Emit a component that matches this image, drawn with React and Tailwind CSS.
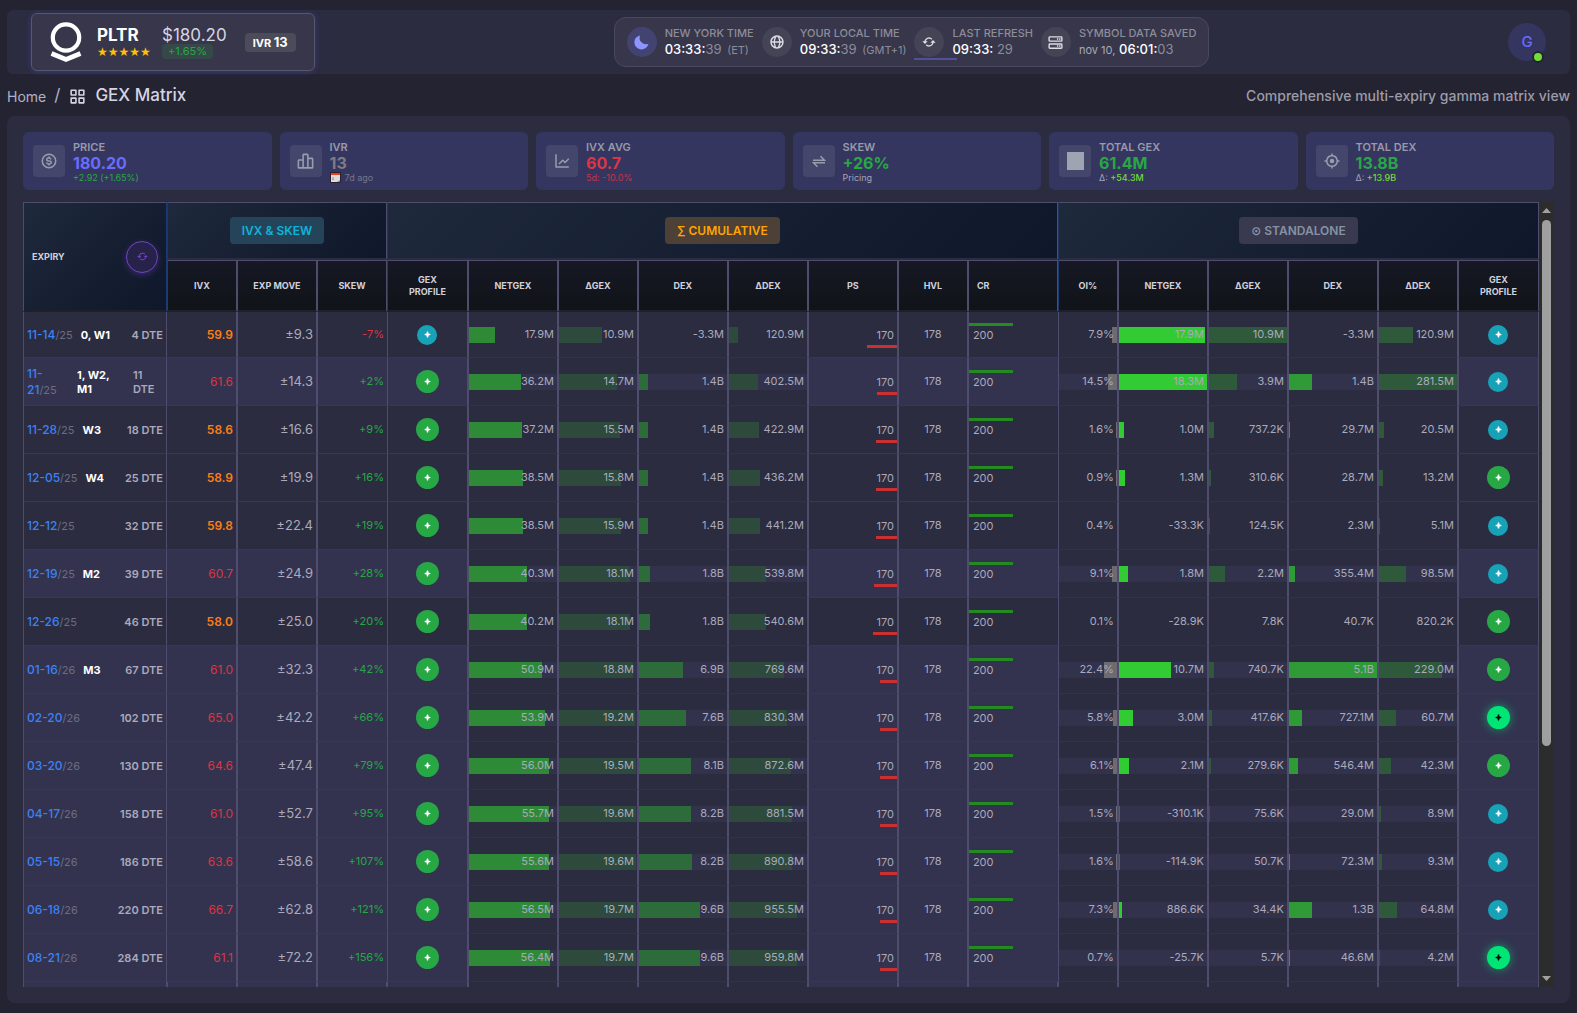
import {
  BiBarChartAlt2,
  BiDollarCircle,
  BiGlobe,
  BiGridAlt,
  BiLineChart,
  BiRefresh,
  BiServer,
  BiSolidMoon,
  BiTargetLock,
} from "react-icons/bi";

// [value, bar width in % of the cell, colour override]
const rows = [
  {
    date: "11-14", year: "/25", tag: "0, W1", dte: "4 DTE", ivx: "59.9", move: "±9.3", skew: "-7%", left: "teal",
    cum: [["17.9M", 30], ["10.9M", 55], ["-3.3M", 0], ["120.9M", 12]], ps: 34,
    oi: ["7.9%", 8], alone: [["17.9M", 98], ["10.9M", 100], ["-3.3M", 0], ["120.9M", 44]], right: "teal",
  },
  {
    date: "11-\n21", year: "/25", tag: "1, W2,\nM1", dte: "11\nDTE", ivx: "61.6", move: "±14.3", skew: "+2%", left: "green", lit: true,
    cum: [["36.2M", 59], ["14.7M", 74], ["1.4B", 10], ["402.5M", 37]], ps: 23,
    oi: ["14.5%", 15], alone: [["18.3M", 100], ["3.9M", 36], ["1.4B", 26], ["281.5M", 100]], right: "teal",
  },
  {
    date: "11-28", year: "/25", tag: "W3", dte: "18 DTE", ivx: "58.6", move: "±16.6", skew: "+9%", left: "green",
    cum: [["37.2M", 60], ["15.5M", 78], ["1.4B", 10], ["422.9M", 38]], ps: 24,
    oi: ["1.6%", 2], alone: [["1.0M", 6], ["737.2K", 7], ["29.7M", 1], ["20.5M", 7]], right: "teal",
  },
  {
    date: "12-05", year: "/25", tag: "W4", dte: "25 DTE", ivx: "58.9", move: "±19.9", skew: "+16%", left: "green",
    cum: [["38.5M", 62], ["15.8M", 79], ["1.4B", 10], ["436.2M", 40]], ps: 24,
    oi: ["0.9%", 2], alone: [["1.3M", 7], ["310.6K", 3], ["28.7M", 0], ["13.2M", 5]], right: "green",
  },
  {
    date: "12-12", year: "/25", tag: "", dte: "32 DTE", ivx: "59.8", move: "±22.4", skew: "+19%", left: "green",
    cum: [["38.5M", 62], ["15.9M", 79], ["1.4B", 10], ["441.2M", 40]], ps: 24,
    oi: ["0.4%", 0], alone: [["-33.3K", 0], ["124.5K", 1], ["2.3M", 0], ["5.1M", 1]], right: "teal",
  },
  {
    date: "12-19", year: "/25", tag: "M2", dte: "39 DTE", ivx: "60.7", move: "±24.9", skew: "+28%", left: "green", lit: true,
    cum: [["40.3M", 66], ["18.1M", 91], ["1.8B", 13], ["539.8M", 48]], ps: 26,
    oi: ["9.1%", 9], alone: [["1.8M", 10], ["2.2M", 21], ["355.4M", 7], ["98.5M", 35]], right: "teal",
  },
  {
    date: "12-26", year: "/25", tag: "", dte: "46 DTE", ivx: "58.0", move: "±25.0", skew: "+20%", left: "green",
    cum: [["40.2M", 66], ["18.1M", 91], ["1.8B", 13], ["540.6M", 48]], ps: 27,
    oi: ["0.1%", 0], alone: [["-28.9K", 0], ["7.8K", 0], ["40.7K", 0], ["820.2K", 0]], right: "green",
  },
  {
    date: "01-16", year: "/26", tag: "M3", dte: "67 DTE", ivx: "61.0", move: "±32.3", skew: "+42%", left: "green", lit: true,
    cum: [["50.9M", 83], ["18.8M", 95], ["6.9B", 50], ["769.6M", 70]], ps: 19,
    oi: ["22.4%", 22], alone: [["10.7M", 59], ["740.7K", 7], ["5.1B", 100], ["229.0M", 81]], right: "green",
  },
  {
    date: "02-20", year: "/26", tag: "", dte: "102 DTE", ivx: "65.0", move: "±42.2", skew: "+66%", left: "green", lit: true,
    cum: [["53.9M", 87], ["19.2M", 97], ["7.6B", 54], ["830.3M", 75]], ps: 19,
    oi: ["5.8%", 6], alone: [["3.0M", 16], ["417.6K", 4], ["727.1M", 15], ["60.7M", 22]], right: "glow",
  },
  {
    date: "03-20", year: "/26", tag: "", dte: "130 DTE", ivx: "64.6", move: "±47.4", skew: "+79%", left: "green", lit: true,
    cum: [["56.0M", 91], ["19.5M", 99], ["8.1B", 59], ["872.6M", 79]], ps: 19,
    oi: ["6.1%", 7], alone: [["2.1M", 11], ["279.6K", 3], ["546.4M", 10], ["42.3M", 15]], right: "green",
  },
  {
    date: "04-17", year: "/26", tag: "", dte: "158 DTE", ivx: "61.0", move: "±52.7", skew: "+95%", left: "green", lit: true,
    cum: [["55.7M", 91], ["19.6M", 99], ["8.2B", 59], ["881.5M", 81]], ps: 19,
    oi: ["1.5%", 2], alone: [["-310.1K", 1, "bg-[#c33238]"], ["75.6K", 1], ["29.0M", 0], ["8.9M", 3]], right: "teal",
  },
  {
    date: "05-15", year: "/26", tag: "", dte: "186 DTE", ivx: "63.6", move: "±58.6", skew: "+107%", left: "green", lit: true,
    cum: [["55.6M", 91], ["19.6M", 99], ["8.2B", 60], ["890.8M", 81]], ps: 19,
    oi: ["1.6%", 2], alone: [["-114.9K", 1, "bg-[#c33238]"], ["50.7K", 0], ["72.3M", 1], ["9.3M", 4]], right: "teal",
  },
  {
    date: "06-18", year: "/26", tag: "", dte: "220 DTE", ivx: "66.7", move: "±62.8", skew: "+121%", left: "green", lit: true,
    cum: [["56.5M", 92], ["19.7M", 99], ["9.6B", 69], ["955.5M", 87]], ps: 19,
    oi: ["7.3%", 7], alone: [["886.6K", 4], ["34.4K", 0], ["1.3B", 26], ["64.8M", 23]], right: "teal",
  },
  {
    date: "08-21", year: "/26", tag: "", dte: "284 DTE", ivx: "61.1", move: "±72.2", skew: "+156%", left: "green", lit: true,
    cum: [["56.4M", 92], ["19.7M", 99], ["9.6B", 69], ["959.8M", 87]], ps: 19,
    oi: ["0.7%", 0], alone: [["-25.7K", 0], ["5.7K", 0], ["46.6M", 1], ["4.2M", 1]], right: "glow",
  },
];

const cumColors = ["bg-[#2f8a38]", "bg-[#2d4a3c]", "bg-[#2e6b3a]", "bg-[#2d4a3c]"];
const aloneColors = ["bg-[#33cb33]", "bg-[#2e5a3b]", "bg-[#2f9a37]", "bg-[#2e5a3b]"];

const colWidths = [144, 70, 80, 70, 81, 90, 80, 90, 80, 90, 70, 90, 60, 90, 80, 90, 80, 81];

const subHeads = [
  { label: "IVX", first: true },
  { label: "EXP MOVE" },
  { label: "SKEW", last: true },
  { label: "GEX PROFILE", first: true, narrow: true },
  { label: "NETGEX" },
  { label: "ΔGEX" },
  { label: "DEX" },
  { label: "ΔDEX" },
  { label: "PS" },
  { label: "HVL" },
  { label: "CR", last: true, left: true },
  { label: "OI%", first: true },
  { label: "NETGEX" },
  { label: "ΔGEX" },
  { label: "DEX" },
  { label: "ΔDEX" },
  { label: "GEX PROFILE", last: true, narrow: true },
];

const stats = [
  { label: "PRICE", value: "180.20", color: "text-[#696cff]", icon: <BiDollarCircle size={18} />, note: <span className="text-[#28a745]">+2.92 (+1.65%)</span> },
  {
    label: "IVR", value: "13", color: "text-[#7c7c86]", icon: <BiBarChartAlt2 size={19} />,
    note: (
      <span className="flex items-center gap-1 text-[#76778c]">
        <CalendarIcon />
        7d ago
      </span>
    ),
  },
  { label: "IVX AVG", value: "60.7", color: "text-[#dc3545]", icon: <BiLineChart size={18} />, note: <span className="text-[#c5334b]">5d: -10.0%</span> },
  { label: "SKEW", value: "+26%", color: "text-[#28a745]", icon: <SwapIcon />, note: <span>Pricing</span> },
  { label: "TOTAL GEX", value: "61.4M", color: "text-[#28a745]", icon: <span className="block h-[18px] w-[17px] bg-[#a0a3b1]" />, note: <span>Δ: <span className="font-medium text-[#71dd37]">+54.3M</span></span> },
  { label: "TOTAL DEX", value: "13.8B", color: "text-[#28a745]", icon: <BiTargetLock size={18} />, note: <span>Δ: <span className="font-medium text-[#71dd37]">+13.9B</span></span> },
];

function CalendarIcon() {
  return (
    <svg width="11" height="11" viewBox="0 0 11 11" aria-hidden="true">
      <rect width="11" height="11" rx="1" fill="#2b2030" />
      <rect x="1" y="3" width="9" height="7" fill="#dcdce0" />
      <rect x="1" y="1" width="9" height="2" fill="#e8401c" />
      <path d="M3 5v3M2.500 7.500h1" stroke="#e07060" strokeWidth="1" />
      <path d="M10 8v2H7z" fill="#8a8a92" />
    </svg>
  );
}

function SwapIcon() {
  return (
    <svg width="14" height="13" viewBox="0 0 14 13" fill="none" stroke="currentColor" strokeWidth="1.500" aria-hidden="true">
      <path d="M1 5.200h11.500L8.500 1.200M13 7.800H1.500l4 4" />
    </svg>
  );
}

function PalantirLogo() {
  return (
    <svg width="32" height="41" viewBox="0 0 32 41" fill="none" stroke="#fff" aria-hidden="true">
      <circle cx="16" cy="15.500" r="13.200" strokeWidth="4.200" />
      <path d="M1.500 31.500L16 37.500l14.500-6" strokeWidth="4.600" />
    </svg>
  );
}

function ProfileButton({ kind }) {
  const styles = {
    teal: "size-5 bg-[#17a2b8] text-white",
    green: "size-[23px] bg-[#28a745] text-white",
    glow: "size-[23px] bg-[#00e676] text-black shadow-[0_0_10px_rgba(0,230,118,0.6)]",
  };
  return (
    <button type="button" aria-label="Open GEX profile" className={`mx-auto flex items-center justify-center rounded-full ${styles[kind]}`}>
      <svg width="7" height="7" viewBox="0 0 7 7" fill="currentColor" aria-hidden="true">
        <path d="M2.900 0.600h1.200l.4 1.900 1.900.4v1.200l-1.900.4-.4 1.900H2.900l-.4-1.900-1.900-.4V2.900l1.900-.4z" />
      </svg>
    </button>
  );
}

function BarCell({ cell, color, lit, right }) {
  const [value, width, override] = cell;
  return (
    <td className="border-x border-b border-x-[#4f4d6e] border-b-[#33324a] p-0">
      <div className={`relative flex h-4 items-center justify-end pr-[3px] ${lit ? "bg-[#32324d]" : ""}`}>
        <div className={`absolute inset-y-0 ${right ? "right-0" : "left-0"} ${override || color}`} style={{ width: `${width}%` }} />
        <span className="relative">{value}</span>
      </div>
    </td>
  );
}

function Row({ row, first }) {
  const lit = row.lit ? "bg-[#33334f]" : "";
  const line = "border-b border-b-[#38384f]";
  const cell = `${line} border-x border-x-[#4f4d6e] p-0 ${lit}`;
  const hot = row.ivx.startsWith("5");
  const wrapped = row.date.includes("\n");
  return (
    <tr className={first ? "h-[46px]" : "h-12"}>
      <td className={`${line} border-x border-x-[#4f4d6e] px-[3px] py-0 ${lit}`}>
        <div className="flex items-center justify-between whitespace-pre font-semibold text-[11px] leading-[14px]">
          <div className="flex items-center gap-2">
            <span className={`leading-4 ${wrapped ? "w-[42px]" : ""}`}>
              <a href="#expiry" className="text-[12px] font-medium text-[#3b82f6]">{row.date}</a>
              <span className="font-normal text-[#6c6d80]">{row.year}</span>
            </span>
            {row.tag && <span className="font-bold text-white">{row.tag}</span>}
          </div>
          <span className={`text-[#aaaabc] ${wrapped ? "w-[30px]" : ""}`}>{row.dte}</span>
        </div>
      </td>
      <td className={`${line} border-r border-r-[#4f4d6e] pr-[3px] text-right text-[12px] ${lit} ${hot ? "font-semibold text-[#fd7e14]" : "text-[#dc3545]"}`}>{row.ivx}</td>
      <td className={`${cell} text-right text-[13px]`}><span className="pr-[3px]">{row.move}</span></td>
      <td className={`${line} border-l border-l-[#4f4d6e] pr-[3px] text-right ${lit} ${row.skew.startsWith("-") ? "text-[#dc3545]" : "text-[#28a745]"}`}>{row.skew}</td>
      <td className={`${cell}`}><ProfileButton kind={row.left} /></td>
      {row.cum.map((c, i) => (
        <BarCell key={i} cell={c} color={cumColors[i]} lit={row.lit} />
      ))}
      <td className={cell}>
        <div className="flex flex-col items-end pt-[3px]">
          <span className="pr-[3px] leading-5">170</span>
          <div className="h-[3px] bg-[#c9302f]" style={{ width: `${row.ps}%` }} />
        </div>
      </td>
      <td className={`${cell} text-center`}>178</td>
      <td className={`${line} border-l border-l-[#4f4d6e] p-0 ${lit}`}>
        <div className="flex flex-col items-start pb-[3px]">
          <div className="h-[3px] w-1/2 bg-[#228b22]" />
          <span className="pl-1 leading-[18px]">200</span>
        </div>
      </td>
      <BarCell cell={row.oi} color="bg-[#6b6b70]" lit={row.lit} right />
      {row.alone.map((c, i) => (
        <BarCell key={i} cell={c} color={aloneColors[i]} lit={row.lit} />
      ))}
      <td className={cell}><ProfileButton kind={row.right} /></td>
    </tr>
  );
}

function Clock({ icon, iconClass, title, bar, children }) {
  return (
    <div className="relative flex items-center gap-2">
      <span className={`flex size-[30px] items-center justify-center rounded-full ${iconClass}`}>{icon}</span>
      <div className="whitespace-nowrap">
        <div className="text-[11px] font-medium leading-[14px] text-[#8d8d99]">{title}</div>
        <div className="text-[13px] leading-[18px] text-[#8d8d99]">{children}</div>
      </div>
      {bar && <span className="absolute -bottom-0.5 left-0 h-0.5 w-[43px] bg-[#50519a]" />}
    </div>
  );
}

function TopBar() {
  return (
    <header className="flex h-16 items-center justify-between rounded-md bg-[#2b2c40] px-6">
      <div className="flex h-[58px] w-[284px] items-center rounded-md border border-[#57576d] bg-[#37364b] pl-[18px] shadow-[0_1px_6px_rgba(105,108,255,0.25)]">
        <PalantirLogo />
        <div className="ml-[15px] w-[65px]">
          <div className="text-[17px] font-bold leading-[19px] text-white">PLTR</div>
          <div className="font-['DejaVu_Sans'] text-[12px] leading-[14px] text-[#ffc107]">★★★★★</div>
        </div>
        <div className="flex flex-col items-start">
          <span className="text-[17px] leading-[18px] text-[#d5d5e2]">$180.20</span>
          <span className="rounded-sm bg-[#354a48] px-1.5 text-[11px] leading-[15px] text-[#28a745]">+1.65%</span>
        </div>
        <span className="ml-[18px] rounded bg-[#4c4b59] px-2 text-[11px] font-bold leading-[18px] text-white">
          IVR <span className="text-[13px]">13</span>
        </span>
      </div>
      <div className="flex h-[50px] items-center gap-2 rounded-xl border border-[#49495e] bg-[#37364b] px-3">
        <Clock icon={<BiSolidMoon size={17} />} iconClass="bg-[#434371] text-[#8f95ff]" title="NEW YORK TIME">
          <span className="font-medium text-white">03:33:</span>39 <span className="pl-0.5 text-[11px]">(ET)</span>
        </Clock>
        <Clock icon={<BiGlobe size={16} />} iconClass="bg-[#444456] text-[#dcdce4]" title="YOUR LOCAL TIME">
          <span className="font-medium text-white">09:33:</span>39 <span className="pl-0.5 text-[11px]">(GMT+1)</span>
        </Clock>
        <Clock icon={<BiRefresh size={16} />} iconClass="bg-[#444456] text-[#dcdce4]" title="LAST REFRESH" bar>
          <span className="font-medium text-white">09:33:</span> 29
        </Clock>
        <Clock icon={<BiServer size={17} />} iconClass="bg-[#444456] text-[#dcdce4]" title="SYMBOL DATA SAVED">
          <span className="text-[11px] text-[#aaaab4]">nov 10,</span> <span className="font-medium text-white">06:01:</span>03
        </Clock>
      </div>
      <button type="button" className="relative size-[38px] rounded-full bg-[#35365f] text-[15px] font-medium text-[#696cff]">
        G
        <span className="absolute -bottom-0.5 right-0.5 size-3 rounded-full border-2 border-[#232333] bg-[#71dd37]" />
      </button>
    </header>
  );
}

function StatCard({ stat }) {
  return (
    <div className="flex h-[58px] items-center gap-2 rounded-md bg-[#35365f] px-2.5">
      <div className="flex size-8 items-center justify-center rounded bg-[#45466b] text-[#9a9cb0]">{stat.icon}</div>
      <div className="text-[#a3a4b8]">
        <div className="text-[11px] font-semibold leading-[14px] text-[#9899ac]">{stat.label}</div>
        <div className={`text-[16px] font-bold leading-[18px] ${stat.color}`}>{stat.value}</div>
        <div className="text-[9px] leading-[11px]">{stat.note}</div>
      </div>
    </div>
  );
}

function GroupHead({ span, children, className }) {
  return (
    <th
      colSpan={span}
      className="border-b-2 border-l border-r border-t border-b-[#2b2c40] border-l-[#1f3564] border-r-[#4f4d6e] border-t-[#4f4d6e] bg-linear-[135deg] from-[#1e293b] to-[#0f172a] p-0"
    >
      <span className={`inline-block rounded px-3 text-[12px] font-semibold leading-[27px] ${className}`}>{children}</span>
    </th>
  );
}

function MatrixTable() {
  return (
    <table className="w-full table-fixed border-separate border-spacing-0 text-[11px] text-[#aaaabc]">
      <colgroup>
        {colWidths.map((w, i) => (
          <col key={i} style={{ width: `${(w / 1516) * 100}%` }} />
        ))}
      </colgroup>
      <thead className="text-[#d0d0dc]">
        <tr className="h-[58px]">
          <th
            rowSpan={2}
            className="border-b-2 border-l border-r border-t border-b-[#1f2029] border-l-[#4f4d6e] border-r-[#1c3a75] border-t-[#4f4d6e] bg-linear-[135deg] from-[#1e293b] to-[#0f172a] px-2 py-0"
          >
            <div className="flex items-center justify-between text-[9px] font-bold">
              EXPIRY
              <button type="button" aria-label="Refresh expiries" className="flex size-8 items-center justify-center rounded-full border border-[#6f42c1] bg-[#26224a] text-[#6f42c1] shadow-[0_2px_6px_rgba(111,66,193,0.4)]">
                <BiRefresh size={13} />
              </button>
            </div>
          </th>
          <GroupHead span={3} className="bg-[#25445a] text-[#0db4da]">IVX &amp; SKEW</GroupHead>
          <GroupHead span={8} className="bg-[#4d4037] text-[#ffa500]">∑ CUMULATIVE</GroupHead>
          <GroupHead span={6} className="bg-[#393a50] text-[#8592a3]">⊙ STANDALONE</GroupHead>
        </tr>
        <tr className="h-[52px]">
          {subHeads.map((h, i) => (
            <th
              key={i}
              className={`border-b-2 border-t border-b-[#1f2029] border-t-[#4f4d6e] bg-linear-to-b from-[#161824] to-[#101418] py-0 text-[9px] font-bold leading-3 ${h.narrow ? "px-4" : "px-2"} ${h.first ? "border-l border-l-[#1c3a75]" : "border-l border-l-[#4f4d6e]"} border-r border-r-[#4f4d6e] ${h.left ? "text-left" : "text-center"}`}
            >
              {h.label}
            </th>
          ))}
        </tr>
      </thead>
      <tbody>
        {rows.map((row, i) => (
          <Row key={row.date} row={row} first={i === 0} />
        ))}
        <tr className="h-12">
          {colWidths.map((_, i) => (
            <td key={i} className={`border-x border-x-[#4f4d6e] p-0 ${(i > 4 && i < 9) || (i > 11 && i < 17) ? "" : "bg-[#33334f]"}`} />
          ))}
        </tr>
      </tbody>
    </table>
  );
}

function ScrollTrack() {
  return (
    <div className="flex w-[15px] shrink-0 flex-col items-center bg-[#2c2c2c] py-1.5" aria-hidden="true">
      <svg width="9" height="5" viewBox="0 0 9 5" fill="#a0a0a0"><path d="M0 5L4.500 0L9 5z" /></svg>
      <div className="mt-[7px] h-[68%] w-[9px] rounded-full bg-[#9f9f9f]" />
      <svg className="mt-auto" width="9" height="5" viewBox="0 0 9 5" fill="#a0a0a0"><path d="M0 0L4.500 5L9 0z" /></svg>
    </div>
  );
}

export default function App() {
  return (
    <div className="min-h-screen bg-[#242332] px-[7px] py-2.5 font-[Inter,'DejaVu_Sans',sans-serif] text-[#d5d5e2]">
      <TopBar />
      <nav className="flex h-[42px] items-center justify-between text-[14px]">
        <div className="flex items-center pt-0.5">
          <a href="#home" className="text-[#b2b2c4]">Home</a>
          <span className="px-2 text-[17px] text-[#b2b2c4]">/</span>
          <BiGridAlt size={19} />
          <h1 className="ml-2 text-[17px] font-medium">GEX Matrix</h1>
        </div>
        <p className="font-medium text-[#9c9ca8]">Comprehensive multi-expiry gamma matrix view</p>
      </nav>
      <main className="rounded-lg bg-[#2b2c40] p-4">
        <section className="grid grid-cols-6 gap-2">
          {stats.map((s) => (
            <StatCard key={s.label} stat={s} />
          ))}
        </section>
        <section className="mt-3 flex h-[calc(100vh-228px)]">
          <div className="min-w-0 flex-1 overflow-y-auto [scrollbar-width:none]">
            <MatrixTable />
          </div>
          <ScrollTrack />
        </section>
      </main>
    </div>
  );
}
